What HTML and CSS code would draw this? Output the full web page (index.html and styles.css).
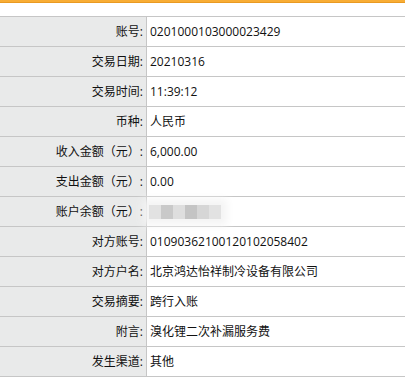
FILE: index.html
```html
<!DOCTYPE html>
<html lang="zh">
<head>
<meta charset="utf-8">
<link rel="stylesheet" href="styles.css">
</head>
<body>
<div class="topbar"></div>
<table class="detail">
  <tr><th>账号:</th><td>0201000103000023429</td></tr>
  <tr><th>交易日期:</th><td>20210316</td></tr>
  <tr><th>交易时间:</th><td>11:39:12</td></tr>
  <tr><th>币种:</th><td>人民币</td></tr>
  <tr><th>收入金额（元）:</th><td>6,000.00</td></tr>
  <tr><th>支出金额（元）:</th><td>0.00</td></tr>
  <tr><th>账户余额（元）:</th><td><span class="blur"><i class="b1"></i><i class="b2"></i><i class="b3"></i><i class="b4"></i><i class="b5"></i><i class="b6"></i></span></td></tr>
  <tr><th>对方账号:</th><td>01090362100120102058402</td></tr>
  <tr><th>对方户名:</th><td>北京鸿达怡祥制冷设备有限公司</td></tr>
  <tr><th>交易摘要:</th><td>跨行入账</td></tr>
  <tr><th>附言:</th><td>溴化锂二次补漏服务费</td></tr>
  <tr><th>发生渠道:</th><td>其他</td></tr>
</table>
</body>
</html>
```
FILE: styles.css
```css
html, body {
  margin: 0;
  padding: 0;
  background: #fff;
}
body {
  font-family: "Open Sans", "Noto Sans CJK SC", sans-serif;
  font-size: 12px;
  color: #111;
}
.topbar {
  height: 2px;
  background: #f8ad35;
  border-bottom: 1px solid #e99a22;
  margin-bottom: 13px;
}
.detail {
  width: 100%;
  border-collapse: collapse;
  border-top: 1px solid #c6c6c6;
}
.detail th,
.detail td {
  height: 29px;
  padding: 0;
  border-bottom: 1px solid #c6c6c6;
  line-height: 16px;
  vertical-align: middle;
}
.detail th {
  width: 143px;
  padding-right: 3px;
  text-align: right;
  font-weight: normal;
  background: #e9eaea;
  border-right: 1px solid #c6c6c6;
  white-space: nowrap;
}
.detail td {
  padding-left: 3px;
  text-align: left;
}
.blur {
  display: inline-flex;
  vertical-align: middle;
  margin-left: -1px;
  box-shadow: 0 0 8px 6px #f4f4f4;
  background: #f4f4f4;
}
.blur i {
  display: block;
  width: 12px;
  height: 14px;
}
.b1 { background: #e2e2e2; }
.b2 { background: #c9c9c9; }
.b3 { background: #dedede; }
.b4 { background: #c4c4c4; }
.b5 { background: #d6d6d6; }
.b6 { background: #e2e2e2; }
```
